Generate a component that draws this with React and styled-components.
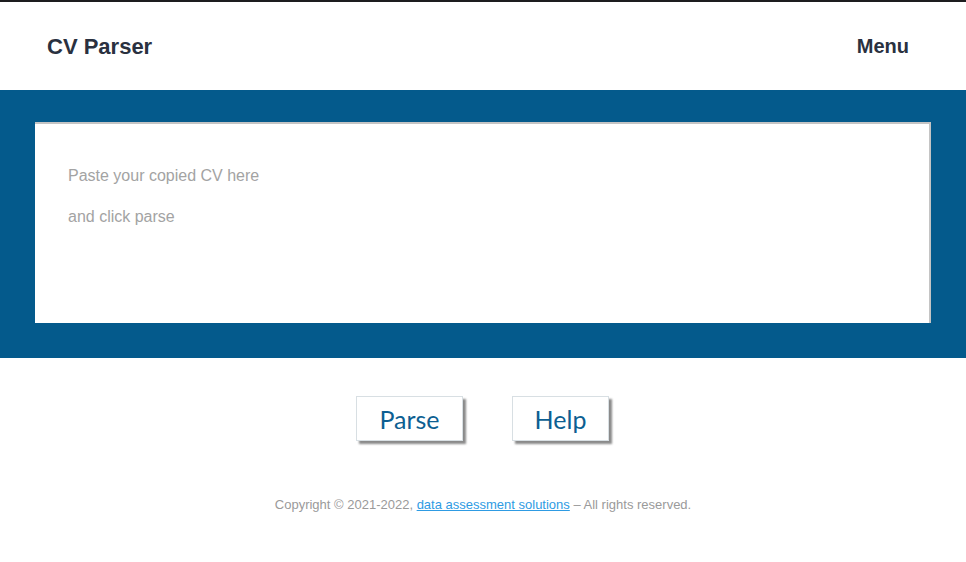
import React from "react";
import styled, { createGlobalStyle } from "styled-components";

const Global = createGlobalStyle`
  html, body { margin: 0; padding: 0; background: #fff; }
  body { font-family: "Liberation Sans", Arial, sans-serif; }
  * { box-sizing: border-box; }
`;

const Page = styled.div`
  border-top: 2px solid #1d1d1f;
  min-height: 562px;
`;

const Header = styled.header`
  height: 88px;
  display: flex;
  align-items: center;
  justify-content: space-between;
  padding: 0 57px 0 47px;
`;

const Brand = styled.div`
  font-family: "Liberation Sans", Arial, sans-serif;
  font-weight: bold;
  font-size: 22px;
  color: #2a3140;
  margin-top: 1px;
`;

const MenuLink = styled.div`
  font-family: "Liberation Sans", Arial, sans-serif;
  font-weight: bold;
  font-size: 20px;
  color: #2a3140;
  margin-top: 1px;
`;

const Band = styled.section`
  background: #045a8c;
  padding: 32px 35px 35px 35px;
`;

const Input = styled.textarea`
  display: block;
  width: 100%;
  height: 201px;
  resize: none;
  border: none;
  border-top: 2px solid #c4c4c4;
  border-right: 2px solid #c4c4c4;
  background: #fff;
  padding: 42px 33px;
  font-family: "Liberation Sans", Arial, sans-serif;
  font-size: 16px;
  line-height: 20.5px;
  outline: none;
  &::placeholder { color: #a3a3a3; }
`;

const Actions = styled.div`
  display: flex;
  justify-content: center;
  gap: 49px;
  padding: 38px 1px 0 0;
`;

const Button = styled.button`
  width: ${p => p.$w}px;
  height: 45px;
  background: #fff;
  border: 1px solid #d8dfe3;
  box-shadow: 3px 3px 2px #8a8a8a;
  font-family: Lato, "Open Sans", sans-serif;
  font-size: 25px;
  color: #0d5f92;
  cursor: pointer;
  padding: 1px 0 0 0;
`;

const Footer = styled.footer`
  text-align: center;
  padding-top: 56px;
  font-family: "Liberation Sans", Arial, sans-serif;
  font-size: 13px;
  color: #9a9a9a;
`;

const FooterLink = styled.a`
  color: #2e9be3;
  text-decoration: underline;
`;

export default function App() {
  return (
    <>
      <Global />
      <Page>
        <Header>
          <Brand>CV Parser</Brand>
          <MenuLink>Menu</MenuLink>
        </Header>
        <Band>
          <Input placeholder={"Paste your copied CV here\n\nand click parse"} />
        </Band>
        <Actions>
          <Button $w={107}>Parse</Button>
          <Button $w={97}>Help</Button>
        </Actions>
        <Footer>
          Copyright © 2021-2022, <FooterLink href="#">data assessment solutions</FooterLink> – All rights reserved.
        </Footer>
      </Page>
    </>
  );
}
